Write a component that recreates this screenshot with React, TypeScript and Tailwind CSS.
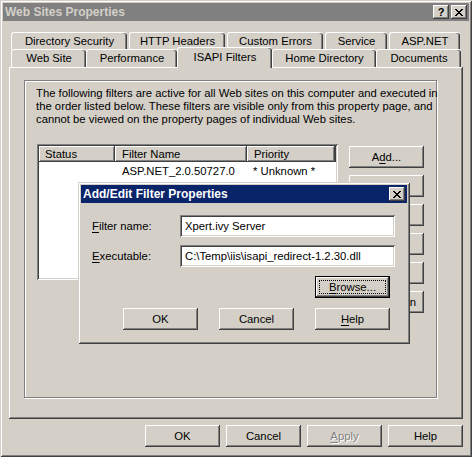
const raised =
  "shadow-[inset_-1px_-1px_#404040,inset_1px_1px_#ffffff,inset_-2px_-2px_#808080,inset_2px_2px_#d4d0c8]";
const sunken =
  "shadow-[inset_1px_1px_#808080,inset_-1px_-1px_#ffffff,inset_2px_2px_#404040,inset_-2px_-2px_#d4d0c8]";
const frame =
  "shadow-[inset_1px_1px_#d4d0c8,inset_-1px_-1px_#404040,inset_2px_2px_#ffffff,inset_-2px_-2px_#808080]";

const Btn = ({ children, className = "" }: { children: React.ReactNode; className?: string }) => (
  <div className={`flex h-[22px] w-[75px] shrink-0 items-center justify-center bg-[#d4d0c8] ${raised} ${className}`}>
    {children}
  </div>
);

const U = ({ children }: { children: React.ReactNode }) => (
  <span className="underline underline-offset-[2px]">{children}</span>
);

const CloseGlyph = () => (
  <svg width="8" height="7" viewBox="0 0 8 7" shapeRendering="crispEdges">
    <path d="M0 0h2v1H0zM6 0h2v1H6zM1 1h2v1H1zM5 1h2v1H5zM2 2h4v1H2zM3 3h2v1H3zM2 4h4v1H2zM1 5h2v1H1zM5 5h2v1H5zM0 6h2v1H0zM6 6h2v1H6z" fill="#000" />
  </svg>
);

const TitleBtn = ({ children }: { children: React.ReactNode }) => (
  <div className={`flex h-[14px] w-[16px] items-center justify-center bg-[#d4d0c8] ${raised}`}>{children}</div>
);

const Tab = ({ label, w, className = "" }: { label: string; w: string; className?: string }) => (
  <div
    className={`flex items-center justify-center whitespace-nowrap rounded-t-[3px] border-l border-t border-white bg-[#d4d0c8] shadow-[inset_-1px_0_#404040,inset_-2px_0_#808080] ${w} ${className}`}
  >
    {label}
  </div>
);

export default function App() {
  return (
    <div
      className={`relative h-[457px] w-[472px] whitespace-nowrap bg-[#d4d0c8] p-[3px] text-[11.3px] leading-[13px] text-black ${frame}`}
      style={{ fontFamily: '"Liberation Sans", Arial, sans-serif' }}
    >
      {/* title bar */}
      <div className="flex h-[18px] items-center justify-between bg-[#808080] pl-[2px] pr-[2px]">
        <span className="text-[12px] font-bold text-[#d4d0c8]">Web Sites Properties</span>
        <div className="flex gap-[2px]">
          <TitleBtn>
            <span className="text-[11px] leading-[10px] font-bold">?</span>
          </TitleBtn>
          <TitleBtn>
            <CloseGlyph />
          </TitleBtn>
        </div>
      </div>

      {/* tabs */}
      <div className="mt-[11px] pl-[8px]">
        <div className="flex h-[17px] gap-[2px]">
          <Tab label="Directory Security" w="w-[116px]" />
          <Tab label="HTTP Headers" w="w-[96px]" />
          <Tab label="Custom Errors" w="w-[96px]" />
          <Tab label="Service" w="w-[62px]" />
          <Tab label="ASP.NET" w="w-[71px]" />
        </div>
        <div className="flex h-[18px] items-end">
          <Tab label="Web Site" w="w-[75px]" className="h-[18px]" />
          <Tab label="Performance" w="w-[91px]" className="h-[18px]" />
          <Tab label="ISAPI Filters" w="w-[95px]" className="relative z-10 -mb-[1px] h-[21px] pb-[2px]" />
          <Tab label="Home Directory" w="w-[104px]" className="h-[18px]" />
          <Tab label="Documents" w="w-[85px]" className="h-[18px]" />
        </div>
      </div>

      {/* tab page */}
      <div className={`ml-[6px] h-[352px] w-[454px] pl-[15px] pt-[13px] ${raised}`}>
        <div className="h-[318px] w-[413px] border border-[#808080] pl-[11px] pt-[6px] shadow-[1px_1px_#ffffff,inset_1px_1px_#ffffff]">
          <p className="whitespace-nowrap">
            The following filters are active for all Web sites on this computer and executed in
            <br />
            the order listed below. These filters are visible only from this property page, and
            <br />
            cannot be viewed on the property pages of individual Web sites.
          </p>

          <div className="mt-[18px] flex gap-[11px] pl-[1px]">
            {/* list */}
            <div className={`h-[136px] w-[301px] bg-white p-[2px] ${sunken}`}>
              <div className="flex h-[16px]">
                <div className={`flex w-[76px] items-center bg-[#d4d0c8] pl-[6px] ${raised}`}>Status</div>
                <div className={`flex w-[132px] items-center bg-[#d4d0c8] pl-[7px] ${raised}`}>Filter Name</div>
                <div className={`flex w-[88px] items-center bg-[#d4d0c8] pl-[7px] ${raised}`}>Priority</div>
                <div className={`flex-1 bg-[#d4d0c8] ${raised}`} />
              </div>
              <div className="flex h-[18px] items-center">
                <span className="w-[76px]" />
                <span className="w-[131px] pl-[7px]">ASP.NET_2.0.50727.0</span>
                <span className="pl-[7px]">* Unknown *</span>
              </div>
            </div>

            {/* side buttons */}
            <div className="flex flex-col gap-[7px] pt-[2px]">
              <Btn className="w-[74px]">
                A<U>d</U>d...
              </Btn>
              <Btn className="w-[74px]">Remove</Btn>
              <Btn className="w-[74px]">Edit</Btn>
              <Btn className="w-[74px]">Disable</Btn>
              <Btn className="w-[74px]">Move Up</Btn>
              <Btn className="w-[74px] justify-end pr-[8px]">Move Down</Btn>
            </div>
          </div>
        </div>
      </div>

      {/* dialog buttons */}
      <div className="mt-[6px] flex justify-end gap-[6px] pr-[6px]">
        <Btn>OK</Btn>
        <Btn>Cancel</Btn>
        <Btn>
          <span className="text-[#808080] [text-shadow:1px_1px_#ffffff]">
            <U>A</U>pply
          </span>
        </Btn>
        <Btn>Help</Btn>
      </div>

      {/* modal dialog */}
      <div className={`absolute left-[78px] top-[182px] h-[162px] w-[332px] bg-[#d4d0c8] p-[3px] ${frame}`}>
        <div className="flex h-[18px] items-center justify-between bg-[#0a246a] pl-[2px] pr-[2px]">
          <span className="text-[12px] font-bold text-white">Add/Edit Filter Properties</span>
          <TitleBtn>
            <CloseGlyph />
          </TitleBtn>
        </div>

        <div className="mt-[12px] flex flex-col gap-[8px] pl-[11px]">
          <div className="flex items-center">
            <span className="w-[88px]">
              <U>F</U>ilter name:
            </span>
            <div className={`flex h-[22px] w-[215px] items-center bg-white pl-[5px] ${sunken}`}>Xpert.ivy Server</div>
          </div>
          <div className="flex items-center">
            <span className="w-[88px]">
              <U>E</U>xecutable:
            </span>
            <div className={`flex h-[22px] w-[215px] items-center bg-white pl-[5px] ${sunken}`}>
              C:\Temp\iis\isapi_redirect-1.2.30.dll
            </div>
          </div>
        </div>

        <div className="mt-[9px] flex justify-end pr-[17px]">
          <div className="relative h-[22px] w-[75px] border border-black">
            <div className={`flex h-full w-full items-center justify-center bg-[#d4d0c8] ${raised}`}>
              <U>B</U>rowse...
            </div>
            <div className="absolute inset-[3px] border border-dotted border-black" />
          </div>
        </div>

        <div className="mt-[10px] flex justify-end gap-[21px] pr-[17px]">
          <Btn>OK</Btn>
          <Btn>Cancel</Btn>
          <Btn>
            <U>H</U>elp
          </Btn>
        </div>
      </div>
    </div>
  );
}
